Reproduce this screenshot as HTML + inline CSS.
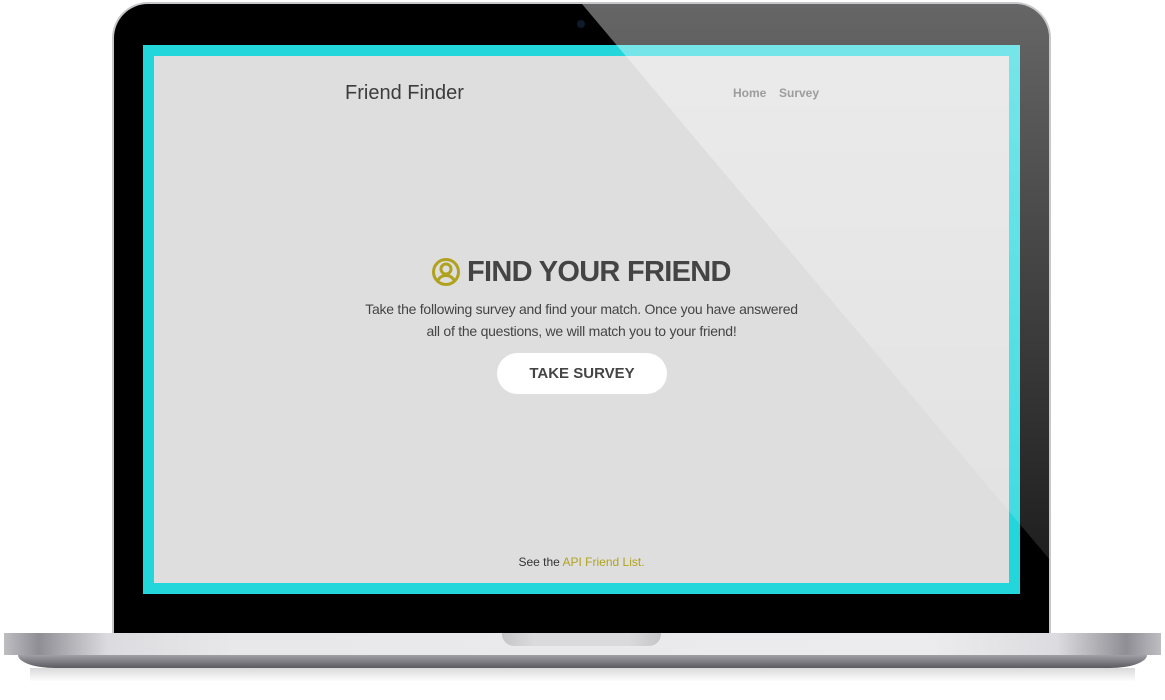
<!DOCTYPE html>
<html><head><meta charset="utf-8"><style>
html,body{margin:0;padding:0;width:1165px;height:700px;background:#fff;overflow:hidden;font-family:"Liberation Sans",sans-serif;position:relative}
.bezel{position:absolute;left:114px;top:4px;width:935px;height:640px;background:#000;border-radius:34px 34px 0 0;box-shadow:0 0 0 2px #c8c8cc}
.cyan{position:absolute;left:143px;top:45px;width:877px;height:549px;background:#22d6dc}
.screen{position:absolute;left:154px;top:56px;width:855px;height:527px;background:#dedede;overflow:hidden}
.gwrap{position:absolute;left:114px;top:4px;width:935px;height:640px;border-radius:34px 34px 0 0;overflow:hidden;pointer-events:none}
.cam{position:absolute;left:577px;top:20px;width:8px;height:8px;border-radius:50%;background:#111a2a}
.base{position:absolute;left:4px;top:633px;width:1157px;height:22px;background:linear-gradient(90deg,#bdbdc2 0,#8e8e94 3%,#dcdce0 9%,#e8e8ea 20%,#ececee 80%,#dcdce0 91%,#8e8e94 97%,#bdbdc2 100%)}
.base2{position:absolute;left:18px;top:655px;width:1129px;height:13px;background:linear-gradient(#a0a0a6,#5a5a60);border-radius:0 0 40px 40px/0 0 14px 14px}
.shadow{position:absolute;left:30px;top:668px;width:1105px;height:14px;background:linear-gradient(#dadada,#fff)}
.notch{position:absolute;left:502px;top:633px;width:159px;height:13px;background:linear-gradient(90deg,#c6c6ca,#dadadd 20%,#dadadd 80%,#c6c6ca);border-radius:0 0 12px 12px}
.t{position:absolute;color:#444;white-space:nowrap}
</style></head><body>
<div class="bezel"></div>
<div class="cam"></div>
<div class="cyan"></div>
<div class="screen">
<div class="t" style="left:191px;top:26px;font-size:20px;color:#3c3c3c">Friend Finder</div>
<div class="t" style="left:579px;top:30px;font-size:12px;font-weight:bold;color:#666">Home</div>
<div class="t" style="left:625px;top:30px;font-size:12px;font-weight:bold;color:#666">Survey</div>
<svg style="position:absolute;left:277px;top:201px" width="30" height="30" viewBox="0 0 30 30"><circle cx="15" cy="15" r="12.5" fill="none" stroke="#b0a21f" stroke-width="3"/><circle cx="15" cy="12" r="5" fill="none" stroke="#b0a21f" stroke-width="3"/><path d="M6.5 24c2-4 5-5.5 8.5-5.5s6.5 1.5 8.5 5.5" fill="none" stroke="#b0a21f" stroke-width="3"/></svg>
<div class="t" style="left:313px;top:200px;font-size:29px;font-weight:bold;color:#444;letter-spacing:-0.7px">FIND YOUR FRIEND</div>
<div class="t" style="left:0;width:855px;text-align:center;top:242px;font-size:14px;line-height:22px;color:#444;letter-spacing:-0.25px">Take the following survey and find your match. Once you have answered<br>all of the questions, we will match you to your friend!</div>
<div style="position:absolute;left:343px;top:297px;width:170px;height:41px;background:#fff;border-radius:21px;text-align:center;line-height:41px;font-size:15px;font-weight:bold;color:#444">TAKE SURVEY</div>
<div class="t" style="left:0;width:855px;text-align:center;top:499px;font-size:12px;color:#333">See the <span style="color:#b0a21f">API Friend List.</span></div>
</div>
<div class="gwrap"><svg width="935" height="640" viewBox="114 4 935 640"><defs><linearGradient id="g" x1="0" y1="0" x2="0" y2="1"><stop offset="0" stop-color="#fff" stop-opacity="0.4"/><stop offset="1" stop-color="#fff" stop-opacity="0.12"/></linearGradient></defs><polygon points="582,4 1050,4 1050,560" fill="url(#g)"/></svg></div>
<div class="base"></div>
<div class="notch"></div>
<div class="base2"></div>
<div class="shadow"></div>
</body></html>
